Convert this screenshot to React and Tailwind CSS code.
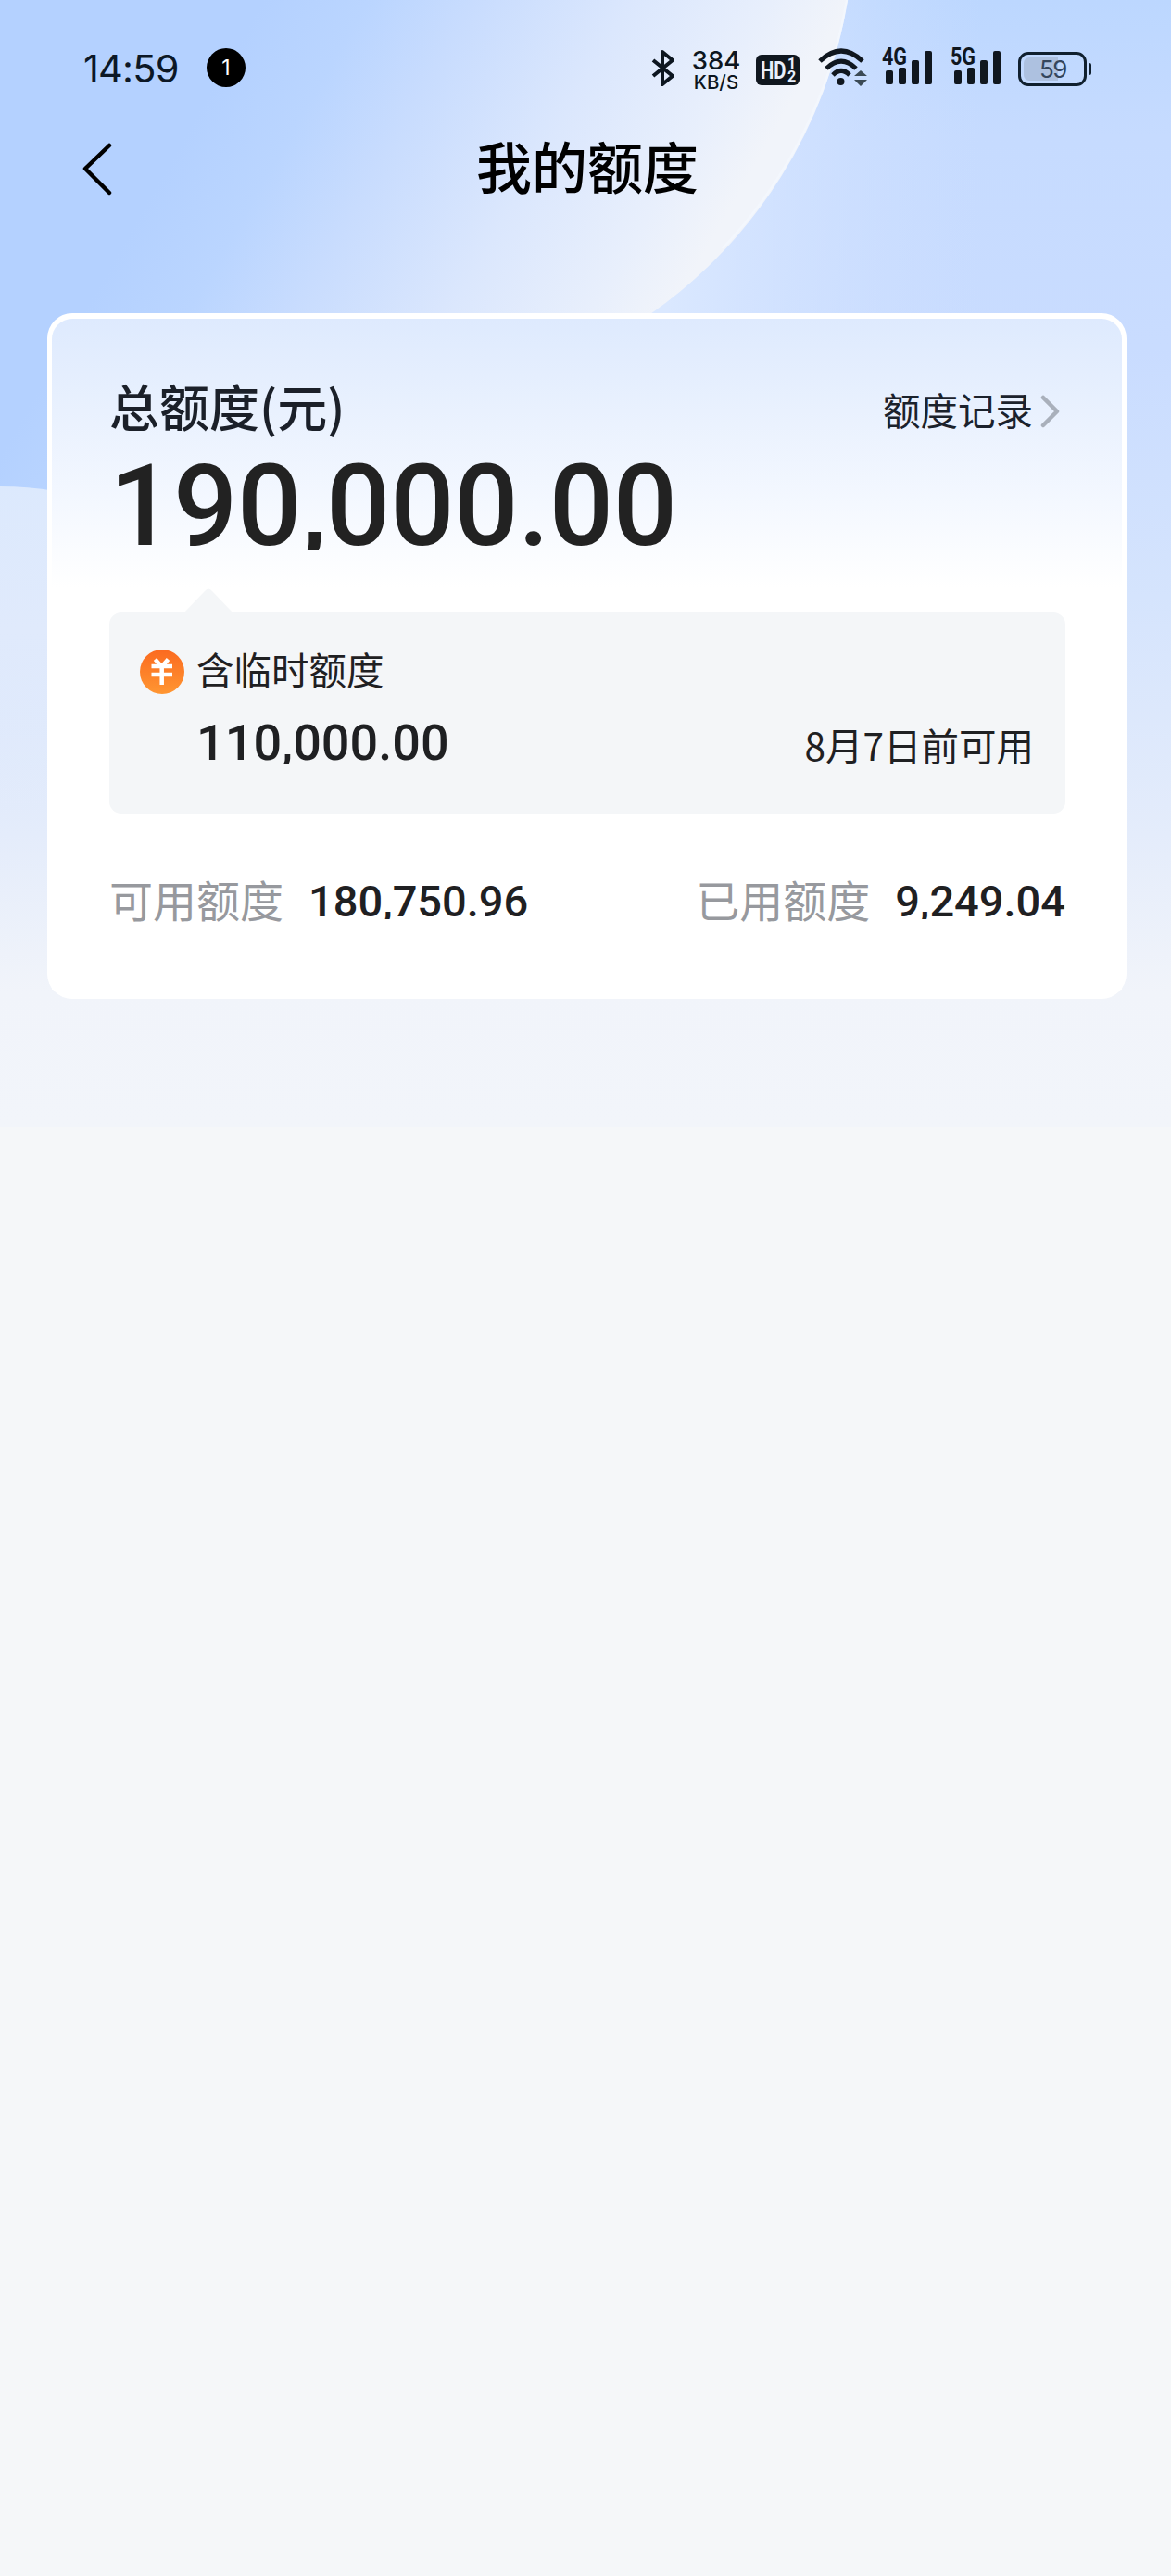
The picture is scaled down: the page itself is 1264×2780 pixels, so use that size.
const latin = 'font-[Roboto,"Noto_Sans_CJK_SC",sans-serif]';
const status = 'font-[Inter,"Noto_Sans_CJK_SC",sans-serif]';

function Backdrop() {
  return (
    <svg className="absolute left-0 top-0 h-[1216px] w-[1264px]" viewBox="0 0 1264 1216" aria-hidden="true">
      <defs>
        <linearGradient id="base" x1="0" y1="0" x2="0" y2="1">
          <stop offset="0" stopColor="#bcd7ff" />
          <stop offset="0.12" stopColor="#c6dbff" />
          <stop offset="0.31" stopColor="#c9dcff" />
          <stop offset="0.53" stopColor="#d5e4fd" />
          <stop offset="0.74" stopColor="#e4ecfb" />
          <stop offset="0.88" stopColor="#f1f4fa" />
          <stop offset="1" stopColor="#f2f5fa" />
        </linearGradient>
        <linearGradient id="glow" gradientUnits="userSpaceOnUse" x1="720" y1="0" x2="1060" y2="0">
          <stop offset="0" stopColor="#dae8ff" />
          <stop offset="1" stopColor="#cfe0ff" stopOpacity="0" />
        </linearGradient>
        <linearGradient id="band" gradientUnits="userSpaceOnUse" x1="0" y1="0" x2="710" y2="410">
          <stop offset="0.3" stopColor="#b4d1ff" />
          <stop offset="0.42" stopColor="#bad5ff" />
          <stop offset="0.54" stopColor="#c8dcfe" />
          <stop offset="0.72" stopColor="#dbe7fd" />
          <stop offset="0.88" stopColor="#e8effc" />
          <stop offset="0.97" stopColor="#f1f4fa" />
        </linearGradient>
        <linearGradient id="side" x1="0" y1="0" x2="0" y2="1">
          <stop offset="0" stopColor="#dce9fd" />
          <stop offset="0.4" stopColor="#e0eafc" />
          <stop offset="1" stopColor="#e4ecfb" stopOpacity="0" />
        </linearGradient>
      </defs>
      <rect width="1264" height="1216" fill="url(#base)" />
      <rect x="690" width="370" height="345" fill="url(#glow)" />
      <rect y="520" width="60" height="400" fill="url(#side)" />
      <path d="M0 0H915A514 514 0 0 1 702 339L60 530Q30 525 0 525Z" fill="url(#band)" />
      <path d="M914 0A514 514 0 0 1 780 268" fill="none" stroke="#f4f8fe" strokeWidth="2.500" strokeOpacity="0.8" />
    </svg>
  );
}

function Signal({ label }) {
  return (
    <div className="relative h-[40px] w-[54px]">
      <span className={`${latin} absolute -top-[3px] left-0 origin-left scale-x-[0.86] text-[25px] leading-[24px] font-bold`}>{label}</span>
      <svg className="absolute left-[4px] top-0" width="50" height="38" viewBox="0 0 50 38" fill="currentColor">
        <rect x="0" y="23" width="8" height="15" rx="2" />
        <rect x="14" y="20" width="8" height="18" rx="2" />
        <rect x="28" y="12" width="8" height="26" rx="2" />
        <rect x="42" y="2" width="8" height="36" rx="2" />
      </svg>
    </div>
  );
}

function StatusBar() {
  return (
    <div className={`${status} flex h-[148px] items-start pl-[89px] pt-[50px] text-[#0c1826]`}>
      <div className="-mt-[3px] w-[134px] pl-px text-[41.500px] leading-[54px] tracking-[-0.8px]">14:59</div>
      <div className="mt-[2px] flex size-[42px] items-center justify-center rounded-full bg-black text-[23px] leading-none text-white">1</div>
      <svg className="ml-[438px] mt-[3px]" width="26" height="42" viewBox="0 0 26 42" fill="none" stroke="#0d1620" strokeWidth="4" strokeLinejoin="round">
        <path d="M2 12L23 29L12 38V3L23 12L2 29" />
      </svg>
      <div className="ml-[17px] flex w-[54px] flex-col items-center text-[#0d1620]">
        <span className="text-[27.500px] leading-[30px] font-medium">384</span>
        <span className="mt-[-3px] text-[20.500px] leading-[23px] font-medium">KB/S</span>
      </div>
      <div className={`${latin} ml-[16px] mt-[9px] flex h-[33px] w-[47px] items-center rounded-[6px] bg-[#10171f] pl-[5px] text-[#e8effc]`}>
        <span className="w-[29px] origin-left scale-x-[0.78] text-[26px] leading-none font-bold">HD</span>
        <span className="flex flex-col text-[16px] leading-[14px] font-bold">
          <span>1</span>
          <span>2</span>
        </span>
      </div>
      <svg className="ml-[20px] mt-[1px]" width="54" height="42" viewBox="0 0 54 42" fill="none" stroke="#10171f" strokeWidth="5">
        <path d="M2 15Q25 -7 48 15" />
        <path d="M9 23Q25 7 41 23" />
        <path d="M16 30Q25 21 34 30" />
        <circle cx="24.500" cy="37" r="4" fill="#10171f" stroke="none" />
        <path d="M39 31L46 25L53 31ZM39 35L46 42L53 35Z" fill="#3b4a55" stroke="none" />
      </svg>
      <div className="ml-[15px] mt-[3px] flex gap-[20px] text-[#10171f]">
        <Signal label="4G" />
        <Signal label="5G" />
      </div>
      <div className="ml-[19px] mt-[6px] flex items-center">
        <div className="h-[37px] w-[74px] rounded-[11px] border-[3px] border-[#10202f] p-[3px]">
          <div className="flex h-full items-center rounded-[6px] bg-[linear-gradient(90deg,#adc1e0_37px,transparent_37px)] pl-[17px] text-[26px] leading-none tracking-[-1.5px] text-[#34465c]">59</div>
        </div>
        <span className="ml-[2px] h-[13px] w-[3px] rounded-r-[2px] bg-[#10202f]" />
      </div>
    </div>
  );
}

function NavBar() {
  return (
    <div className="flex h-[190px] items-start">
      <svg className="ml-[88px] mt-[5px]" width="34" height="58" viewBox="0 0 34 58" fill="none" stroke="#000" strokeWidth="4.500" strokeLinecap="round" strokeLinejoin="round">
        <path d="M30 4L4 29L30 55" />
      </svg>
      <h1 className="ml-[392px] -mt-[14px] text-[60px] leading-[88px] font-medium text-black">我的额度</h1>
    </div>
  );
}

/* The thousands comma is trimmed so that its tail stays close to the baseline. */
function Amount({ value, className, comma }) {
  const [head, tail] = value.split(",");
  return (
    <div className={`${latin} ${className} font-medium`}>
      {head}
      <span className={`inline-block ${comma}`}>,</span>
      {tail}
    </div>
  );
}

function Stat({ label, value }) {
  return (
    <div className="flex items-center">
      <span className="-mt-[6px] text-[47px] leading-[68px] text-[#97999e]">{label}</span>
      <Amount value={value} className="ml-[27px] text-[47px] leading-[68px]" comma="[clip-path:inset(0_0_15px_0)]" />
    </div>
  );
}

function CreditCard() {
  return (
    <section className="ml-[51px] h-[740px] w-[1165px] rounded-[27px] bg-white px-[5px] pt-[6px]">
      <div className="rounded-t-[22px] bg-[linear-gradient(180deg,#deeafe_0px,#e9f1fe_100px,#f4f8ff_200px,#fff_290px)] pl-[62px] pr-[61px] text-[#1f2022]">
        <div className="flex h-[145px] items-start justify-between pt-[55px]">
          <h2 className="text-[54px] leading-[78px] font-medium text-[#1b2029]">总额度(元)</h2>
          <div className="mt-[18px] flex items-center pr-[6px]">
            <span className="-mt-[3px] text-[40.500px] leading-[56px] text-[#1b222c]">额度记录</span>
            <svg className="ml-[7px]" width="22" height="38" viewBox="0 0 22 38" fill="none" stroke="#a9b0bb" strokeWidth="4.500" strokeLinecap="round" strokeLinejoin="round">
              <path d="M4 4L19 19L4 34" />
            </svg>
          </div>
        </div>
        <Amount value="190,000.00" className="h-[172px] text-[122px] leading-[116px] tracking-[-0.3px] text-[#222]" comma="[clip-path:inset(0_0_11px_0)]" />
        <div className="relative flex h-[217px] items-start justify-between rounded-[13px] bg-[#f4f6f8] pl-[33px] pr-[34px] pt-[35px]">
          <svg className="absolute -top-[26px] left-[80px]" width="54" height="27" viewBox="0 0 54 27">
            <path d="M0 27L24 2Q27 -1 30 2L54 27Z" fill="#f4f6f8" />
          </svg>
          <div>
            <div className="flex h-[58px] items-center">
              <svg width="48" height="48" viewBox="0 0 48 48" fill="none">
                <defs>
                  <linearGradient id="coin" x1="0" y1="0" x2="0" y2="1">
                    <stop offset="0" stopColor="#fb6a20" />
                    <stop offset="1" stopColor="#ff9632" />
                  </linearGradient>
                </defs>
                <circle cx="24" cy="24" r="24" fill="url(#coin)" />
                <path d="M16.500 10.500L23.500 18.500L30.500 10.500M12.500 18H35M12.500 27H35M23.700 18V38" stroke="#fff" strokeWidth="4.500" />
              </svg>
              <span className="-mt-[7px] ml-[13px] text-[40.500px] leading-[58px]">含临时额度</span>
            </div>
            <Amount value="110,000.00" className="pl-[61px] text-[54px] leading-[96px]" comma="[clip-path:inset(0_0_26px_0)]" />
          </div>
          <span className="mt-[79px] text-[40.500px] leading-[58px]">8月7日前可用</span>
        </div>
        <div className="flex h-[190px] items-center justify-between">
          <Stat label="可用额度" value="180,750.96" />
          <Stat label="已用额度" value="9,249.04" />
        </div>
      </div>
    </section>
  );
}

export default function App() {
  return (
    <main className='relative h-[2780px] w-full overflow-hidden bg-[#f5f7f9] font-["Noto_Sans_CJK_SC",sans-serif]'>
      <Backdrop />
      <div className="relative">
        <StatusBar />
        <NavBar />
        <CreditCard />
      </div>
    </main>
  );
}
